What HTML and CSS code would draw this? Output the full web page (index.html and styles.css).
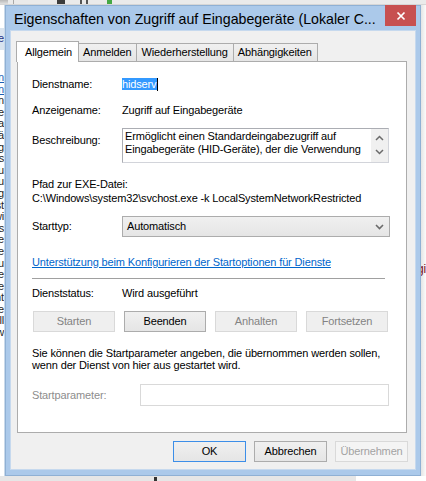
FILE: index.html
```html
<!DOCTYPE html>
<html lang="de">
<head>
<meta charset="utf-8">
<title>Eigenschaften von Zugriff auf Eingabegeräte</title>
<link rel="stylesheet" href="styles.css">
</head>
<body>
<div class="desktop">
  <div class="app-toolbar">
    <span class="tb tb-doc"></span>
    <span class="tb tb-sep"></span>
    <span class="tb tb-stop"></span>
    <span class="tb tb-pause"></span>
    <span class="tb tb-play"></span>
  </div>
  <div class="app-main">
    <div class="app-list">
      <div class="app-head"><span>Dienste</span></div>
      <div class="app-line link"><span>Dienst beenden</span></div>
      <div class="app-line link"><span>Dienst neu starten</span></div>
      <div class="app-line"><span>Beschreibun</span></div>
      <div class="app-line"><span>Ermöglicht e</span></div>
      <div class="app-line"><span>Standardeinga</span></div>
      <div class="app-line"><span>Eingabegerä</span></div>
      <div class="app-line"><span>Verwendung</span></div>
      <div class="app-line"><span>Abkürzungs</span></div>
      <div class="app-line"><span>Tastatu</span></div>
      <div class="app-line"><span>Fernbedienu</span></div>
      <div class="app-line"><span>Multimediag</span></div>
      <div class="app-line"><span>Wenn dieser Dienst</span></div>
      <div class="app-line"><span>beendet wi</span></div>
      <div class="app-line"><span>Abkürzungs</span></div>
      <div class="app-line"><span>die von die</span></div>
      <div class="app-line"><span>gesteuert we</span></div>
      <div class="app-line"><span>nicht mehr fu</span></div>
      <div class="app-line"><span>Dienst deaktivie</span></div>
      <div class="app-line"><span>abhängige Dienste</span></div>
      <div class="app-line"><span>werden nicht</span></div>
      <div class="app-line"><span>gestartet we</span></div>
      <div class="app-line"><span>Kontroll</span></div>
      <div class="app-line"><span>Dienstverw</span></div>
    </div>
    <div class="app-gap"></div>
    <div class="app-edge"><span class="app-edge-text">Ausgi</span></div>
  </div>
  <div class="app-status">
    <span class="status-mark"></span>
    <span class="status-fill"></span>
  </div>
</div>

<div class="window">
  <div class="titlebar">
    <span class="title">Eigenschaften von Zugriff auf Eingabegeräte (Lokaler C...</span>
    <button class="close" type="button" aria-label="Schließen">
      <svg width="10" height="10" viewBox="0 0 10 10"><path d="M1.5 1.5 L8.5 8.5 M8.5 1.5 L1.5 8.5" stroke="#fff" stroke-width="1.7" fill="none"/></svg>
    </button>
  </div>

  <div class="client">
    <div class="tabs">
      <div class="tab active">Allgemein</div>
      <div class="tab">Anmelden</div>
      <div class="tab">Wiederherstellung</div>
      <div class="tab">Abhängigkeiten</div>
    </div>

    <div class="panel">
      <div class="field f-name">
        <span class="label">Dienstname:</span>
        <span class="value"><span class="selected">hidserv</span><span class="caret"></span></span>
      </div>

      <div class="field f-display">
        <span class="label">Anzeigename:</span>
        <span class="value">Zugriff auf Eingabegeräte</span>
      </div>

      <div class="field f-desc">
        <span class="label">Beschreibung:</span>
        <div class="memo">
          <div class="memo-text">Ermöglicht einen Standardeingabezugriff auf<br>Eingabegeräte (HID-Geräte), der die Verwendung</div>
          <div class="memo-scroll">
            <svg width="9" height="6" viewBox="0 0 9 6"><path d="M1 5 L4.5 1.5 L8 5" stroke="#6b6b6b" stroke-width="1.5" fill="none"/></svg>
            <svg width="9" height="6" viewBox="0 0 9 6"><path d="M1 1 L4.5 4.5 L8 1" stroke="#6b6b6b" stroke-width="1.5" fill="none"/></svg>
          </div>
        </div>
      </div>

      <div class="path-label">Pfad zur EXE-Datei:</div>
      <div class="path">C:\Windows\system32\svchost.exe -k LocalSystemNetworkRestricted</div>

      <div class="field f-start">
        <span class="label">Starttyp:</span>
        <div class="combo">
          <span>Automatisch</span>
          <svg width="9" height="6" viewBox="0 0 9 6"><path d="M1 1 L4.5 4.5 L8 1" stroke="#6b6b6b" stroke-width="1.6" fill="none"/></svg>
        </div>
      </div>

      <a class="help-link" href="#">Unterstützung beim Konfigurieren der Startoptionen für Dienste</a>

      <div class="separator"></div>

      <div class="field f-status">
        <span class="label">Dienststatus:</span>
        <span class="value">Wird ausgeführt</span>
      </div>

      <div class="svc-buttons">
        <button class="btn" type="button" disabled>Starten</button>
        <button class="btn" type="button">Beenden</button>
        <button class="btn" type="button" disabled>Anhalten</button>
        <button class="btn" type="button" disabled>Fortsetzen</button>
      </div>

      <p class="hint">Sie können die Startparameter angeben, die übernommen werden sollen,<br>wenn der Dienst von hier aus gestartet wird.</p>

      <div class="field f-param">
        <span class="label muted">Startparameter:</span>
        <div class="param-input"></div>
      </div>
    </div>

    <div class="dlg-buttons">
      <button class="btn dlg default" type="button">OK</button>
      <button class="btn dlg" type="button">Abbrechen</button>
      <button class="btn dlg" type="button" disabled>Übernehmen</button>
    </div>
  </div>
</div>
</body>
</html>
```

FILE: styles.css
```css
* { box-sizing: border-box; }

html, body { margin: 0; padding: 0; }

body {
  width: 426px;
  height: 481px;
  overflow: hidden;
  position: relative;
  background: #fff;
  color: #000;
  font-family: "Liberation Sans", Arial, sans-serif;
  font-size: 11px;
  letter-spacing: -0.14px;
  line-height: 13px;
}

/* ---------- application behind the dialog ---------- */
.desktop {
  width: 426px;
  height: 481px;
  display: flex;
  flex-direction: column;
}

.app-toolbar {
  height: 5px;
  flex: none;
  display: flex;
  background: #eaeaea;
  border-bottom: 1px solid #d6d6d6;
}
.tb { display: block; height: 4px; }
.tb-doc { width: 8px; background: linear-gradient(#b8b8b8, #e0e0e0); }
.tb-sep { width: 1px; margin-left: 5px; background: #a8a8a8; }
.tb-stop { width: 8px; margin-left: 43px; background: #3c3c3c; }
.tb-pause { width: 8px; margin-left: 15px; border-left: 2px solid #555; border-right: 2px solid #555; }
.tb-play { width: 5px; margin-left: 19px; background: #45a845; }

.app-main { flex: 1; display: flex; min-height: 0; }

.app-list {
  width: 5px;
  flex: none;
  overflow: hidden;
  display: flex;
  flex-direction: column;
  font-size: 11px;
  line-height: 11.6px;
  padding-top: 23px;
  background: #fff;
  border-right: 1px solid #c9d9ea;
}
.app-head {
  height: 22px;
  display: flex;
  justify-content: flex-end;
  align-items: center;
  background: #d9e4ef;
  color: #1e3287;
  margin-bottom: 22px;
  white-space: nowrap;
}
.app-line {
  display: flex;
  justify-content: flex-end;
  white-space: nowrap;
  color: #1e1e1e;
}
.app-line.link { color: #1a5fb4; text-decoration: underline; }

.app-gap { flex: 1; }

.app-edge {
  width: 5px;
  flex: none;
  overflow: hidden;
  display: flex;
  justify-content: flex-end;
  padding-top: 258px;
  background: linear-gradient(90deg, #e4e4e4, #fbfbfb);
}
.app-edge-text {
  color: #7a1020;
  font-size: 12px;
  white-space: nowrap;
  height: 13px;
}

.app-status {
  height: 5px;
  flex: none;
  display: flex;
  background: #e6e6e6;
}
.status-mark { width: 3px; height: 4px; margin-top: 1px; margin-left: 154px; background: #333; }
.status-fill { margin-left: 199px; flex: 1; background: #fff; }

/* ---------- dialog window ---------- */
.window {
  position: absolute;
  left: 5px;
  top: 5px;
  width: 416px;
  height: 471px;
  display: flex;
  flex-direction: column;
  background: #abc9ea;
  border: 1px solid #8fb0d4;
}

.titlebar {
  height: 25px;
  flex: none;
  display: flex;
  align-items: flex-start;
  padding-left: 8px;
}
.title {
  margin-top: 5px;
  font-size: 14.2px;
  letter-spacing: 0;
  line-height: 17px;
  color: #000;
  white-space: nowrap;
}
.close {
  margin-left: auto;
  margin-right: 4px;
  margin-top: -1px;
  width: 31px;
  height: 21px;
  padding: 0;
  border: 0;
  background: #c75050;
  display: flex;
  align-items: center;
  justify-content: center;
}
.close svg { display: block; }

.client {
  flex: 1;
  margin: 0 5px 6px 5px;
  background: #f0f0f0;
  box-shadow: 0 0 0 1px #c6d9ee;
}

/* tab strip */
.tabs {
  display: flex;
  align-items: flex-start;
  height: 21px;
  margin: 10px 0 -1px 5px;
}
.tab {
  height: 18px;
  margin-top: 2px;
  padding: 0 5px 0 4px;
  border: 1px solid #acacac;
  border-bottom: 0;
  margin-left: -1px;
  background: linear-gradient(#f0f0f0, #e5e5e5);
  white-space: nowrap;
  line-height: 17px;
}
.tab.active {
  position: relative;
  z-index: 1;
  height: 21px;
  margin-top: 0;
  margin-left: 0;
  padding: 0 6px 0 8px;
  background: #fff;
  line-height: 20px;
}

.panel {
  width: 390px;
  height: 372px;
  margin-left: 6px;
  background: #fff;
  border: 1px solid #acacac;
  padding: 16px 17px 0 14px;
  display: flex;
  flex-direction: column;
  align-items: flex-start;
}

.field {
  display: grid;
  grid-template-columns: 90px minmax(0, 1fr);
  align-items: center;
  width: 100%;
}
.label { white-space: nowrap; }
.muted { color: #8d8d8d; }
.value { white-space: nowrap; }

.f-name { height: 13px; }
.selected { background: #3399ff; color: #fff; padding: 0 1px 0 0; }
.caret { display: inline-block; width: 1px; height: 13px; background: #000; vertical-align: top; }

.f-display { margin-top: 13px; }

.f-desc { margin-top: 11px; align-items: start; }
.f-desc .label { margin-top: 6px; }
.memo {
  height: 35px;
  display: flex;
  border: 1px solid #abadb3;
  border-right-color: #d2d4da;
  border-bottom-color: #d2d4da;
  background: #fff;
}
.memo-text {
  flex: 1;
  min-width: 0;
  padding: 1px 0 0 2px;
  line-height: 13px;
  white-space: nowrap;
  overflow: hidden;
}
.memo-scroll {
  width: 17px;
  flex: none;
  background: #f0f0f0;
  display: flex;
  flex-direction: column;
  align-items: center;
  justify-content: space-between;
  padding: 6px 0 7px;
}
.memo-scroll svg { display: block; }

.path-label { margin-top: 15px; }
.path { white-space: nowrap; margin-top: 1px; }

.f-start { margin-top: 11px; }
.combo {
  height: 21px;
  width: calc(100% + 1px);
  display: flex;
  align-items: center;
  justify-content: space-between;
  padding: 0 5px 0 4px;
  border: 1px solid #acacac;
  background: linear-gradient(#f0f0f0, #e5e5e5);
}
.combo svg { display: block; }

.help-link {
  margin-top: 19px;
  color: #0066cc;
  text-decoration: underline;
  white-space: nowrap;
}

.separator {
  margin-top: 9px;
  width: 353px;
  height: 1px;
  background: #a0a0a0;
}

.f-status { margin-top: 8px; }

.svc-buttons {
  margin-top: 11px;
  margin-left: 1px;
  width: 355px;
  display: flex;
  justify-content: space-between;
}

.btn {
  font: inherit;
  letter-spacing: inherit;
  height: 21px;
  padding: 0;
  border: 1px solid #acacac;
  background: linear-gradient(#f0f0f0, #e5e5e5);
  color: #000;
}
.svc-buttons .btn { width: 82px; }
.btn:disabled {
  border-color: #d9d9d9;
  background: #efefef;
  color: #838383;
}

.hint {
  margin: 15px 0 0;
  line-height: 12px;
  white-space: nowrap;
}

.f-param { margin-top: 13px; grid-template-columns: 108px minmax(0, 1fr); }
.f-param .label { margin-top: 1px; }
.param-input {
  height: 22px;
  border: 1px solid #d9d9d9;
  background: #fff;
}

/* OK / Abbrechen / Übernehmen */
.dlg-buttons {
  display: flex;
  justify-content: flex-end;
  gap: 8px;
  margin: 8px 7px 0 0;
}
.btn.dlg { width: 73px; }
.btn.default { border-color: #3c8ee8; }
.dlg-buttons .btn:disabled { color: #a3a3a3; background: #f4f4f4; }
```
